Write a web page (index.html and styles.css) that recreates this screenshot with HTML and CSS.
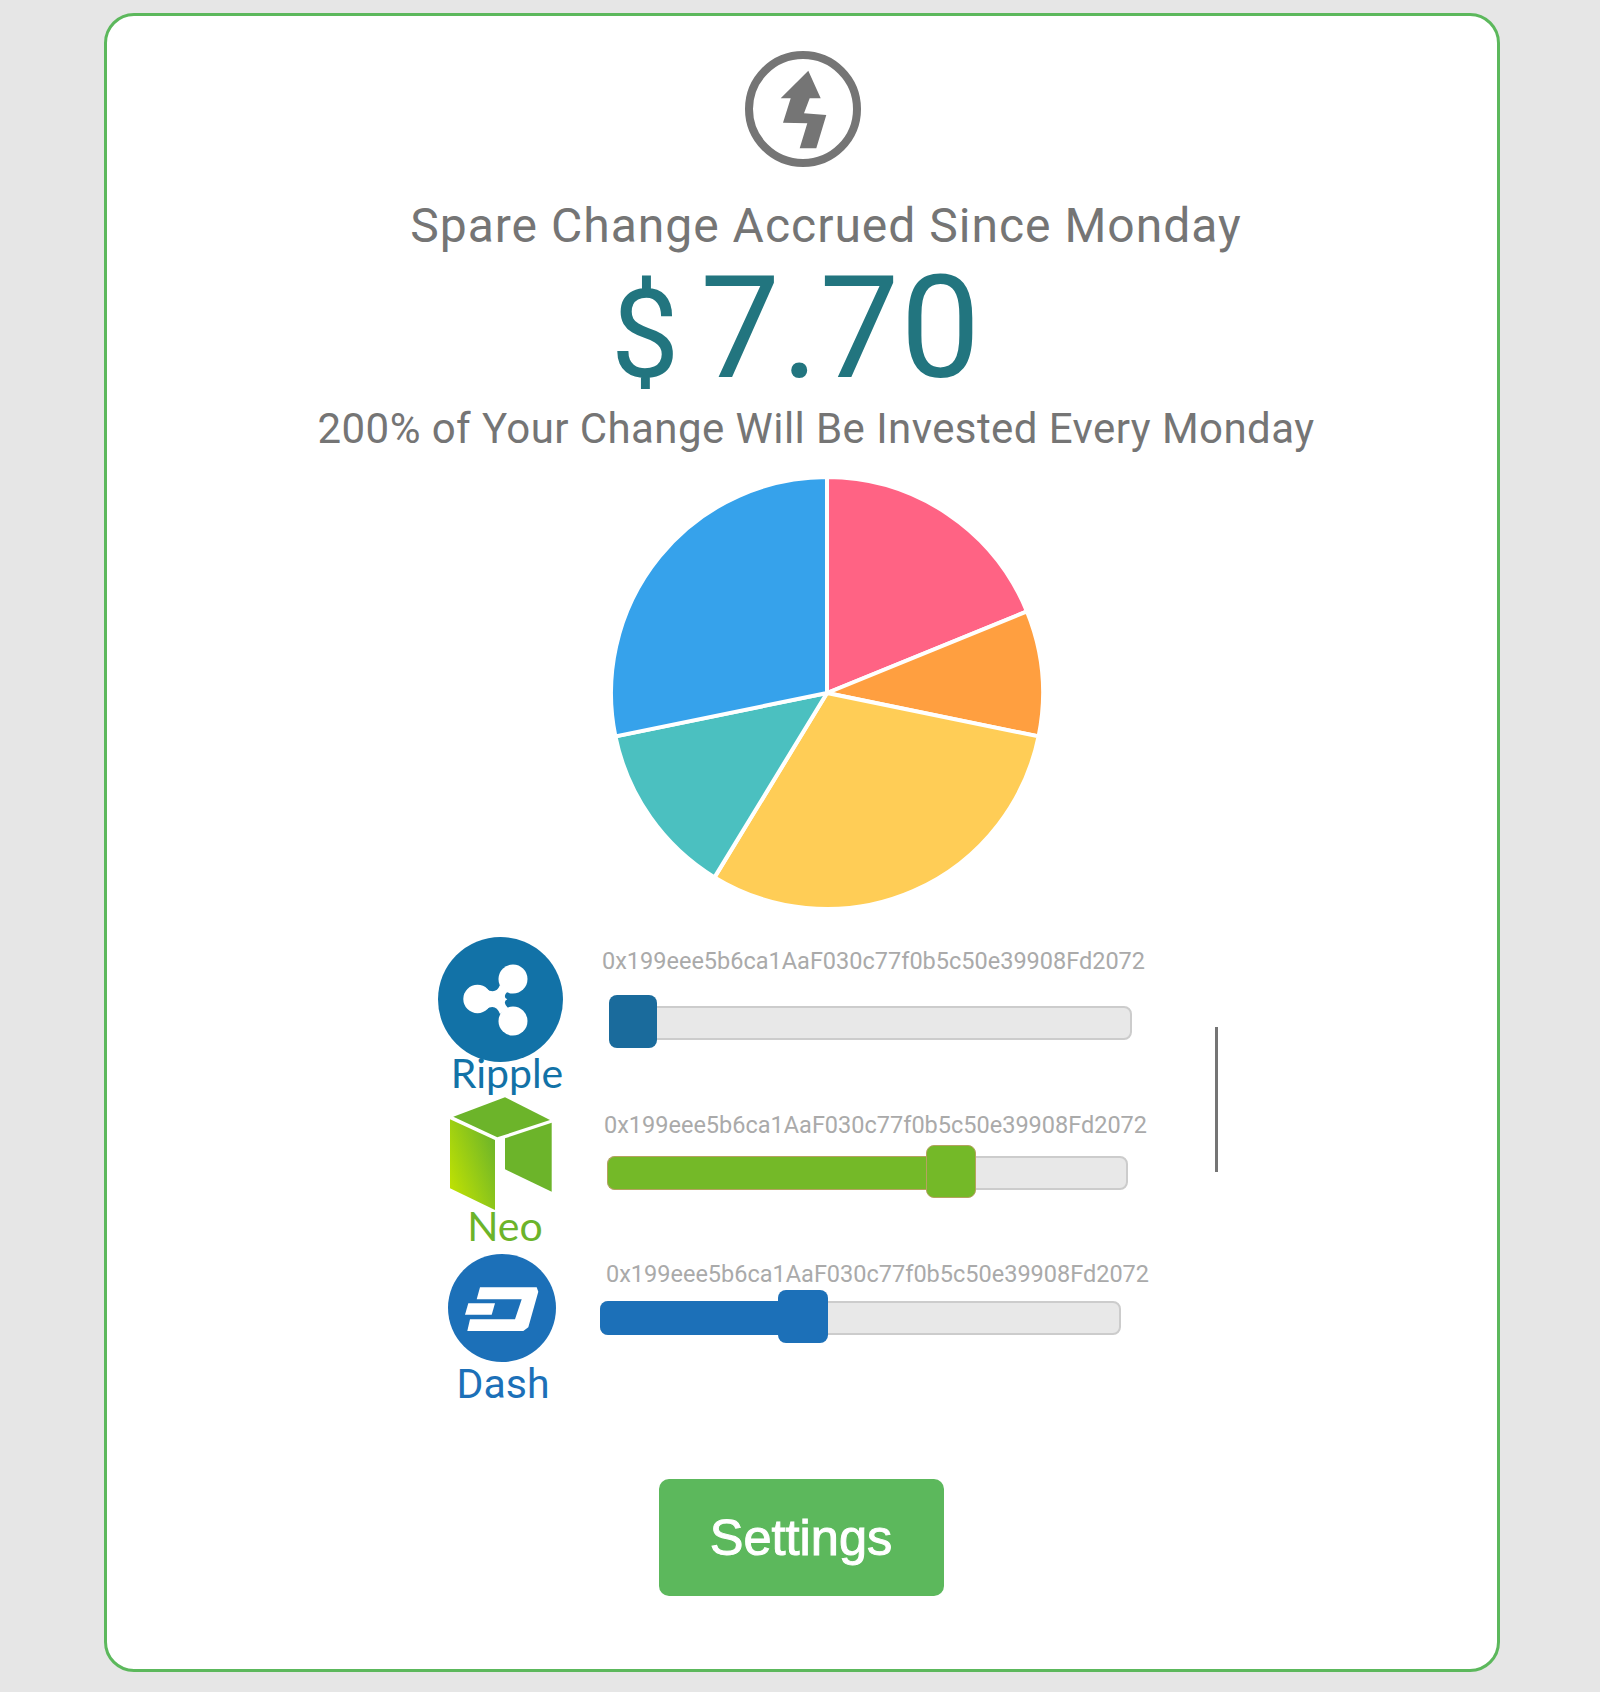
FILE: index.html
```html
<!DOCTYPE html>
<html lang="en">
<head>
    <meta charset="UTF-8">
    <title>Spare Change</title>
    <link rel="stylesheet" href="styles.css">
</head>
<body>

    <div class="card">
        <svg class="bolt-icon" viewBox="0 0 116 116" width="116" height="116">
            <circle cx="58" cy="58" r="54" fill="none" stroke="#757575" stroke-width="8"/>
            <path d="M63.3 19.7 75.7 47.3 64.7 47.3 59 62.3 81.3 64 71.3 97.3 54.7 97.3 62.3 72.3 38 71.7 45.7 47.3 35.7 47.3Z" fill="#757575"/>
        </svg>

        <h2 class="title">Spare Change Accrued Since Monday</h2>
        <div class="amount"><span class="dollar">$</span>7.70</div>
        <h3 class="subtitle">200% of Your Change Will Be Invested Every Monday</h3>

        <!-- pie chart -->
        <svg class="pie" viewBox="-218 -218 436 436" width="436" height="436">
            <g stroke="#fff" stroke-width="4">
                <path d="M0 0V-216A216 216 0 0 1 200 -81.6Z" fill="#ff6384"/>
                <path d="M0 0L200 -81.6A216 216 0 0 1 211.6 43.4Z" fill="#ff9f40"/>
                <path d="M0 0L211.6 43.4A216 216 0 0 1 -112.5 184.4Z" fill="#ffcd56"/>
                <path d="M0 0L-112.5 184.4A216 216 0 0 1 -211.6 43.4Z" fill="#4bc0c0"/>
                <path d="M0 0L-211.6 43.4A216 216 0 0 1 0 -216Z" fill="#36a2eb"/>
            </g>
        </svg>

        <div class="coins">
            <div class="coin-list">

                <div class="coin-row ripple">
                    <div class="coin-badge">
                        <svg class="coin-icon" viewBox="0 0 125 125" width="125" height="125">
                            <circle cx="62.5" cy="62.5" r="62.5" fill="#1272a7"/>
                            <g fill="#fff">
                                <circle cx="75" cy="42" r="14.5"/>
                                <circle cx="39.5" cy="62" r="14.2"/>
                                <circle cx="75" cy="84" r="14.5"/>
                                <path d="M48 52Q58 58 62 48L70 54Q64 60 69.3 62.3 64 65 70 71L62 77Q58 66 48 72Z"/>
                            </g>
                        </svg>
                        <span class="coin-name">Ripple</span>
                    </div>
                    <div class="coin-control">
                        <div class="address">0x199eee5b6ca1AaF030c77f0b5c50e39908Fd2072</div>
                        <div class="track">
                            <div class="handle"></div>
                        </div>
                    </div>
                </div>

                <div class="coin-row neo">
                    <div class="coin-badge">
                        <svg class="coin-icon" viewBox="0 0 103 113" width="103" height="113">
                            <defs>
                                <linearGradient id="neoSide" x1="0" y1="0.9" x2="1" y2="0.2">
                                    <stop offset="0" stop-color="#c4e400"/>
                                    <stop offset="1" stop-color="#6cb42a"/>
                                </linearGradient>
                            </defs>
                            <path d="M56 .3 101 23 48.3 40.3 4.3 19.7Z" fill="#6cb42a"/>
                            <path d="M1 22.3 46 43V113L1 91.3Z" fill="url(#neoSide)"/>
                            <path d="M56 41.3 102.7 25.7V94.7L56 72.3Z" fill="#6cb42a"/>
                        </svg>
                        <span class="coin-name">Neo</span>
                    </div>
                    <div class="coin-control">
                        <div class="address">0x199eee5b6ca1AaF030c77f0b5c50e39908Fd2072</div>
                        <div class="track">
                            <div class="fill" style="width: 319px"></div>
                            <div class="handle"></div>
                        </div>
                    </div>
                </div>

                <div class="coin-row dash">
                    <div class="coin-badge">
                        <svg class="coin-icon" viewBox="0 0 108 108" width="108" height="108">
                            <circle cx="54" cy="54" r="54" fill="#1c70b8"/>
                            <g fill="#fff">
                                <path d="M32 33.3H88.7L90.3 37.7 80.3 73.3 75.3 77H19.3L22 65.3H67L73.7 45.3H28.7Z"/>
                                <path d="M20.3 49.3H47L43.7 60.7H17Z"/>
                            </g>
                        </svg>
                        <span class="coin-name">Dash</span>
                    </div>
                    <div class="coin-control">
                        <div class="address">0x199eee5b6ca1AaF030c77f0b5c50e39908Fd2072</div>
                        <div class="track">
                            <div class="fill" style="width: 178px"></div>
                            <div class="handle"></div>
                        </div>
                    </div>
                </div>

            </div>
            <div class="divider"></div>
        </div>

        <a href="#" class="settings-button">Settings</a>
    </div>

</body>
</html>
```

FILE: styles.css
```css
* {
    box-sizing: border-box;
}

body {
    margin: 0;
    padding: 13px 0 20px 104px;
    background-color: #e6e6e6;
    font-family: 'Roboto', sans-serif;
}

/* Main white card */
.card {
    width: 1396px;
    height: 1659px;
    padding-top: 35px;
    background-color: #fff;
    border: 3px solid #5cb85c;
    border-radius: 30px;
    display: flex;
    flex-direction: column;
    align-items: center;
}

.bolt-icon {
    display: block;
    flex-shrink: 0;
    margin-left: 2px;
}

.title {
    margin: 29px 0 0 48px;
    font-size: 48px;
    line-height: 60px;
    font-weight: 400;
    letter-spacing: 1px;
    color: #757575;
}

.amount {
    margin: 0 0 0 -12px;
    font-size: 142px;
    line-height: 145px;
    letter-spacing: 1px;
    color: #22757f;
}

.dollar {
    font-size: 122px;
    line-height: 0;
    letter-spacing: 21px;
}

.subtitle {
    margin: 1px 0 0 28px;
    font-size: 42px;
    line-height: 54px;
    font-weight: 400;
    letter-spacing: 0.43px;
    color: #757575;
}

.pie {
    display: block;
    flex-shrink: 0;
    margin: 19px 0 0 50px;
}

/* Coin rows */
.coins {
    align-self: flex-start;
    display: flex;
    margin: 26px 0 0 323px;
}

.coin-list {
    width: 785px;
}

.coin-row {
    display: flex;
}

.ripple {
    height: 160px;
}

.neo {
    height: 157px;
}

.dash {
    height: 150px;
}

.coin-badge {
    width: 150px;
    flex-shrink: 0;
    display: flex;
    flex-direction: column;
    align-items: center;
}

.coin-icon {
    display: block;
    flex-shrink: 0;
    margin-right: 10px;
}

.coin-name {
    font-family: 'Lato', sans-serif;
    font-size: 41px;
    font-weight: 400;
    line-height: 38px;
}

.ripple .coin-name {
    color: #1272a7;
    margin: -8px 0 0 4px;
}

.neo .coin-name {
    color: #6cb42a;
    margin-top: -3px;
}

.dash .coin-icon {
    margin-right: 6px;
}

.dash .coin-name {
    font-family: 'Roboto', sans-serif;
    color: #1c70b8;
    line-height: 44px;
    margin-left: -4px;
}

.address {
    font-size: 23.5px;
    line-height: 26px;
    color: #aaa;
}

.track {
    display: flex;
    align-items: center;
    width: 521px;
    height: 34px;
    background-color: #e8e8e8;
    border: 2px solid #ccc;
    border-radius: 8px;
}

.fill {
    height: 34px;
    margin-left: -2px;
    flex-shrink: 0;
    border-radius: 8px 0 0 8px;
}

.handle {
    width: 50px;
    height: 53px;
    margin-bottom: 4px;
    flex-shrink: 0;
    border-radius: 8px;
}

.ripple .coin-control {
    padding: 11px 0 0 22px;
}

.ripple .track {
    margin: 32px 0 0 7px;
    width: 523px;
}

.ripple .handle {
    width: 48px;
    background-color: #1a6b9c;
    margin-left: -2px;
}

.neo .coin-control {
    padding: 15px 0 0 24px;
}

.neo .track {
    margin: 18px 0 0 3px;
}

.neo .fill {
    background-color: #74b928;
    border: 1px solid #b5a25f;
    border-right: none;
}

.neo .handle {
    background-color: #74b928;
    border: 1px solid #b5a25f;
}

.dash .coin-control {
    padding: 7px 0 0 26px;
}

.dash .track {
    margin: 14px 0 0 -6px;
}

.dash .fill,
.dash .handle {
    background-color: #1c70b8;
}

.divider {
    width: 3px;
    height: 145px;
    margin-top: 90px;
    background-color: #757575;
}

/* Settings button */
.settings-button {
    display: flex;
    align-items: center;
    justify-content: center;
    flex-shrink: 0;
    width: 285px;
    height: 117px;
    margin: 75px 2px 0 0;
    background-color: #5cb85c;
    border-radius: 10px;
    font-family: 'Liberation Sans', sans-serif;
    font-size: 50.5px;
    color: #fff;
    -webkit-text-stroke: 1px #fff;
    text-decoration: none;
}
```
